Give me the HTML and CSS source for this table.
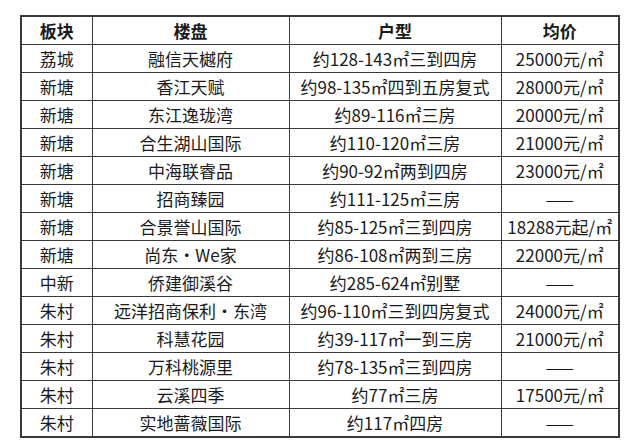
FILE: index.html
```html
<!DOCTYPE html>
<html lang="zh-CN">
<head>
<meta charset="utf-8">
<link rel="stylesheet" href="styles.css">
</head>
<body>
<table class="grid">
  <colgroup>
    <col class="c1"><col class="c2"><col class="c3"><col class="c4">
  </colgroup>
  <thead>
    <tr><th>板块</th><th>楼盘</th><th>户型</th><th>均价</th></tr>
  </thead>
  <tbody>
    <tr><td>荔城</td><td>融信天樾府</td><td>约128-143㎡三到四房</td><td>25000元/㎡</td></tr>
    <tr><td>新塘</td><td>香江天赋</td><td>约98-135㎡四到五房复式</td><td>28000元/㎡</td></tr>
    <tr><td>新塘</td><td>东江逸珑湾</td><td>约89-116㎡三房</td><td>20000元/㎡</td></tr>
    <tr><td>新塘</td><td>合生湖山国际</td><td>约110-120㎡三房</td><td>21000元/㎡</td></tr>
    <tr><td>新塘</td><td>中海联睿品</td><td>约90-92㎡两到四房</td><td>23000元/㎡</td></tr>
    <tr><td>新塘</td><td>招商臻园</td><td>约111-125㎡三房</td><td>——</td></tr>
    <tr><td>新塘</td><td>合景誉山国际</td><td>约85-125㎡三到四房</td><td>18288元起/㎡</td></tr>
    <tr><td>新塘</td><td>尚东·We家</td><td>约86-108㎡两到三房</td><td>22000元/㎡</td></tr>
    <tr><td>中新</td><td>侨建御溪谷</td><td>约285-624㎡别墅</td><td>——</td></tr>
    <tr><td>朱村</td><td>远洋招商保利·东湾</td><td>约96-110㎡三到四房复式</td><td>24000元/㎡</td></tr>
    <tr><td>朱村</td><td>科慧花园</td><td>约39-117㎡一到三房</td><td>21000元/㎡</td></tr>
    <tr><td>朱村</td><td>万科桃源里</td><td>约78-135㎡三到四房</td><td>——</td></tr>
    <tr><td>朱村</td><td>云溪四季</td><td>约77㎡三房</td><td>17500元/㎡</td></tr>
    <tr><td>朱村</td><td>实地蔷薇国际</td><td>约117㎡四房</td><td>——</td></tr>
  </tbody>
</table>
</body>
</html>
```
FILE: styles.css
```css
html, body {
  margin: 0;
  padding: 0;
  background: #ffffff;
}
body {
  padding: 15px 0 0 20px;
  font-family: "Noto Sans CJK SC", "Noto Sans", sans-serif;
  color: #1a1a1a;
}
.grid {
  border-collapse: collapse;
  table-layout: fixed;
  width: 598px;
  border: 2px solid #3a3a3a;
}
.c1 { width: 71px; }
.c2 { width: 197px; }
.c3 { width: 212px; }
.c4 { width: 118px; }
.grid th,
.grid td {
  border: 1px solid #3a3a3a;
  height: 27px;
  padding: 0;
  font-size: 17px;
  line-height: 20px;
  text-align: center;
  white-space: nowrap;
  overflow: hidden;
}
.grid th {
  font-weight: bold;
}
```
